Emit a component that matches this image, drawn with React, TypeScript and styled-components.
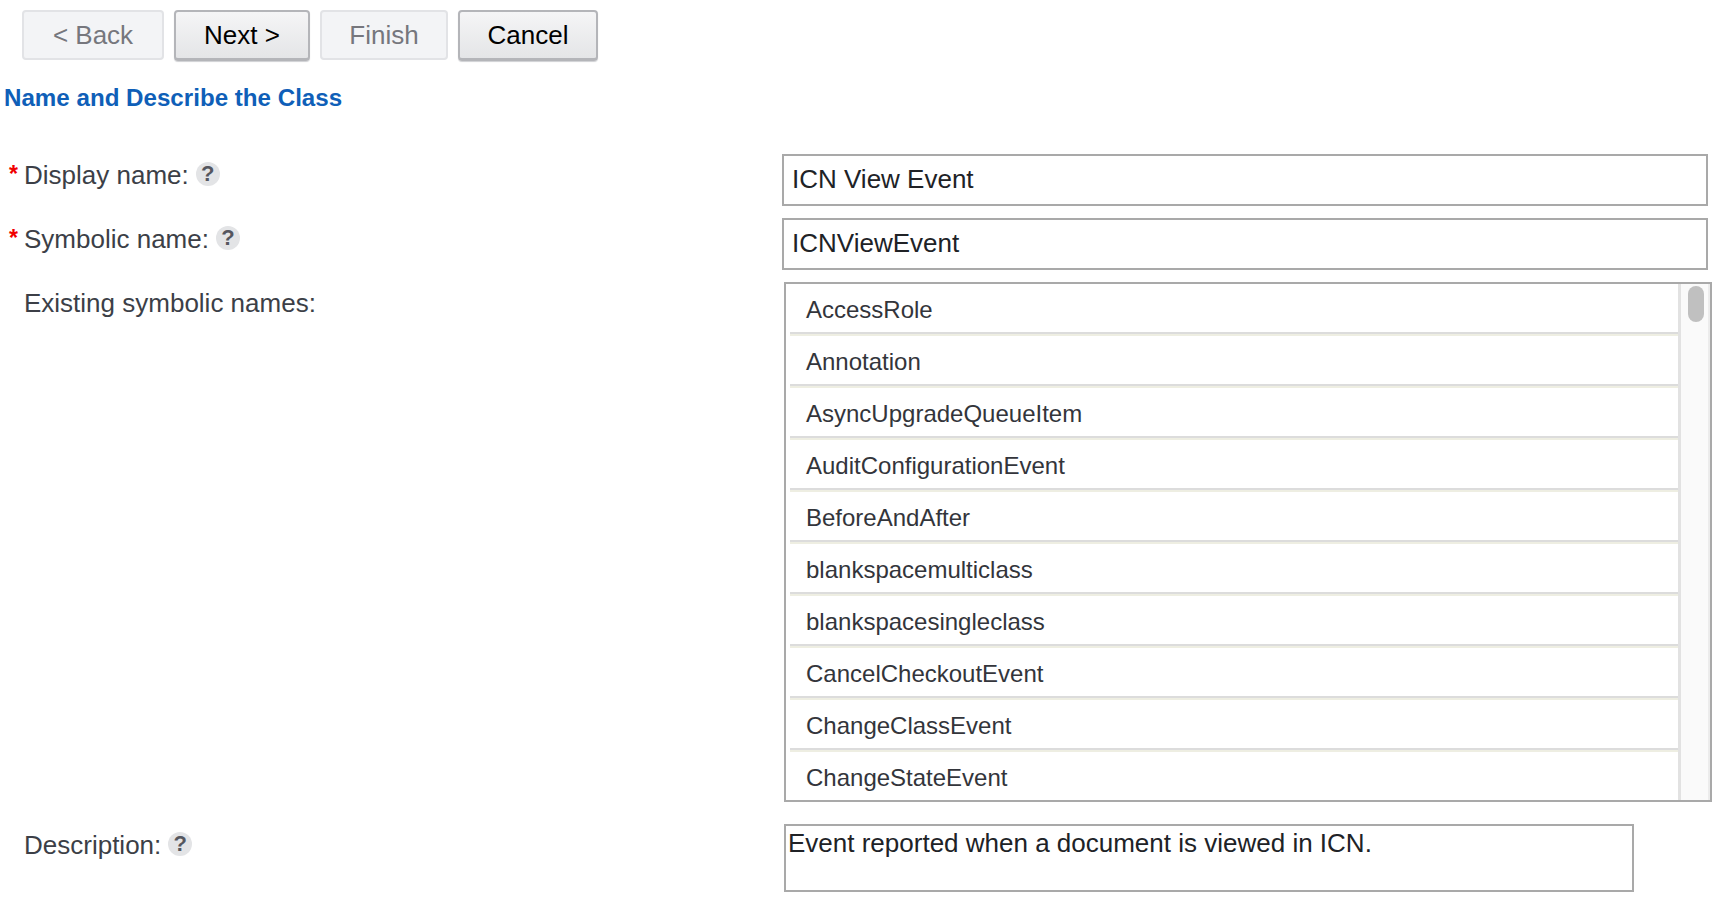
import styled, { createGlobalStyle } from 'styled-components'

const GlobalStyle = createGlobalStyle`
  html,
  body {
    margin: 0;
    padding: 0;
    background: #fff;
    overflow: hidden;
    font-family: 'Liberation Sans', Arial, sans-serif;
  }
`

const Page = styled.div`
  width: 1726px;
  height: 906px;
  overflow: hidden;
  color: #3c3f47;
`

const Toolbar = styled.div`
  display: flex;
  align-items: flex-start;
  gap: 10px;
  padding: 10px 0 0 22px;
`

const WizardButton = styled.button<{ $width: number }>`
  width: ${({ $width }) => $width}px;
  height: 51px;
  padding: 0;
  border-radius: 4px;
  font-family: inherit;
  font-size: 26px;
  border: 2px solid #b4b5b9;
  border-bottom-width: 3px;
  background: linear-gradient(#f5f5f6, #e4e5e7);
  color: #000;
  box-shadow: 0 1px 1px #cfd0d3;

  &:disabled {
    height: 50px;
    border: 2px solid #e2e3e6;
    background: #f3f4f6;
    color: #76777d;
    box-shadow: none;
  }
`

const Heading = styled.h1`
  margin: 19px 0 0 4px;
  height: 36px;
  line-height: 36px;
  font-size: 24.15px;
  font-weight: 700;
  color: #0f5fb8;
`

const Form = styled.div`
  margin-top: 38px;
  display: flex;
  flex-direction: column;
`

const Row = styled.div<{ $gap: number }>`
  display: flex;
  margin-top: ${({ $gap }) => $gap}px;
`

const LabelCell = styled.div`
  width: 782px;
  flex: none;
  display: flex;
  align-items: flex-start;
  height: 42px;
  line-height: 42px;
  font-size: 26px;
  padding-left: 24px;
  box-sizing: border-box;
  position: relative;
`

const Required = styled.span`
  position: absolute;
  left: 9px;
  top: -1px;
  color: #f00000;
  font-weight: 700;
  font-size: 23px;
`

const HelpIcon = styled.span`
  margin: 8px 0 0 7px;
  width: 24px;
  height: 24px;
  border-radius: 50%;
  background: #e3e4e6;
  color: #55575f;
  font-size: 22px;
  font-weight: 700;
  line-height: 24px;
  text-align: center;
`

const TextField = styled.div`
  width: 926px;
  height: 52px;
  box-sizing: border-box;
  border: 2px solid #a9a9a9;
  padding-left: 8px;
  line-height: 46px;
  font-size: 26px;
  color: #202226;
`

const ListBox = styled.div`
  margin-left: 2px;
  width: 928px;
  height: 520px;
  box-sizing: border-box;
  border: 2px solid #a9a9a9;
  display: flex;
  overflow: hidden;
`

const ListItems = styled.div`
  width: 892px;
  flex: none;
  padding-left: 4px;
  box-sizing: border-box;
`

const ListItem = styled.div`
  height: 52px;
  box-sizing: border-box;
  padding-left: 16px;
  line-height: 52px;
  font-size: 24px;
  color: #33353b;
  border-bottom: 2px solid #eeeee2;
  box-shadow: inset 0 -2px 0 #dcdcdc;
`

const ScrollTrack = styled.div`
  flex: 1;
  background: #fafafa;
  border-left: 3px solid #e2e2e2;
  border-right: 2px solid #ececec;
  padding: 2px 0 0 7px;
`

const ScrollThumb = styled.div`
  width: 16px;
  height: 36px;
  border-radius: 8px;
  background: #c0c0c0;
`

const DescriptionBox = styled.div`
  margin-left: 2px;
  width: 850px;
  height: 68px;
  box-sizing: border-box;
  border: 2px solid #a9a9a9;
  padding: 0 0 0 2px;
  line-height: 34px;
  font-size: 26px;
  color: #202226;
`

const symbolicNames = [
  'AccessRole',
  'Annotation',
  'AsyncUpgradeQueueItem',
  'AuditConfigurationEvent',
  'BeforeAndAfter',
  'blankspacemulticlass',
  'blankspacesingleclass',
  'CancelCheckoutEvent',
  'ChangeClassEvent',
  'ChangeStateEvent'
]

export default function App() {
  return (
    <Page>
      <GlobalStyle />
      <Toolbar>
        <WizardButton $width={142} disabled>
          &lt; Back
        </WizardButton>
        <WizardButton $width={136}>Next &gt;</WizardButton>
        <WizardButton $width={128} disabled>
          Finish
        </WizardButton>
        <WizardButton $width={140}>Cancel</WizardButton>
      </Toolbar>
      <Heading>Name and Describe the Class</Heading>
      <Form>
        <Row $gap={0}>
          <LabelCell>
            <Required>*</Required>
            Display name:
            <HelpIcon>?</HelpIcon>
          </LabelCell>
          <TextField>ICN View Event</TextField>
        </Row>
        <Row $gap={12}>
          <LabelCell>
            <Required>*</Required>
            Symbolic name:
            <HelpIcon>?</HelpIcon>
          </LabelCell>
          <TextField>ICNViewEvent</TextField>
        </Row>
        <Row $gap={12}>
          <LabelCell>Existing symbolic names:</LabelCell>
          <ListBox>
            <ListItems>
              {symbolicNames.map(name => (
                <ListItem key={name}>{name}</ListItem>
              ))}
            </ListItems>
            <ScrollTrack>
              <ScrollThumb />
            </ScrollTrack>
          </ListBox>
        </Row>
        <Row $gap={22}>
          <LabelCell>
            Description:
            <HelpIcon>?</HelpIcon>
          </LabelCell>
          <DescriptionBox>Event reported when a document is viewed in ICN.</DescriptionBox>
        </Row>
      </Form>
    </Page>
  )
}
